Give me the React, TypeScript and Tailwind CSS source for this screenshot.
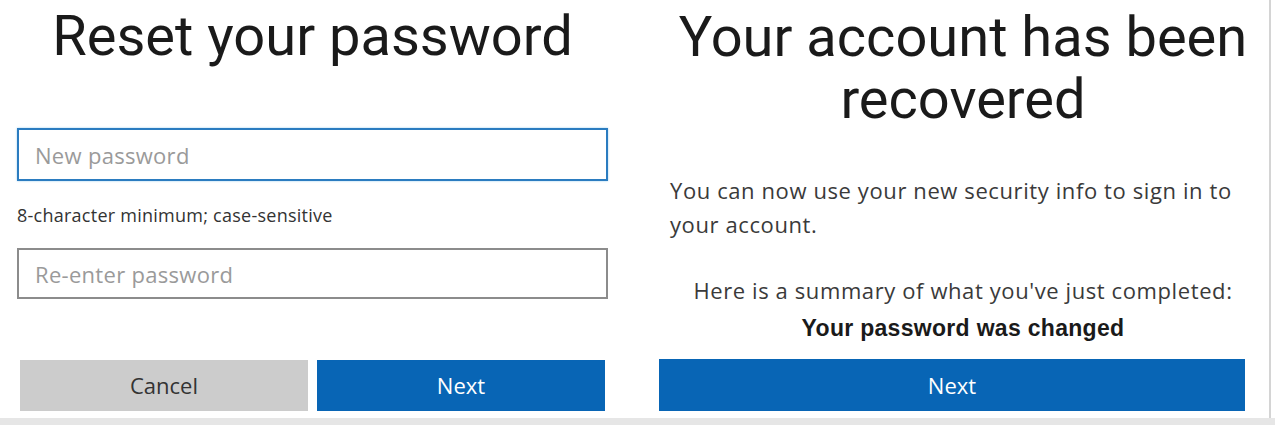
export default function App() {
  return (
    <div className="w-[1275px] h-[425px] bg-white flex flex-col overflow-hidden font-['Open_Sans',sans-serif]">
      <div className="flex flex-1">
        {/* Left: reset password */}
        <div className="w-[659px] pl-[17px] flex flex-col">
          <h1 className="w-[591px] text-center font-['Roboto',sans-serif] text-[56px] leading-[62px] text-[#1a1a1a] mt-[5px]">
            Reset your password
          </h1>
          <input
            type="password"
            placeholder="New password"
            className="mt-[61px] w-[591px] h-[53px] border-2 border-[#2b7cc0] shadow-[0_0_2px_#9fd0f0] px-[16px] text-[22px] tracking-[0.3px] text-[#333] placeholder:text-[#9a9a9a] outline-none"
          />
          <p className="mt-[24px] text-[18px] leading-[20px] tracking-[0.25px] text-[#333]">
            8-character minimum; case-sensitive
          </p>
          <input
            type="password"
            placeholder="Re-enter password"
            className="mt-[23px] w-[591px] h-[51px] border-2 border-[#8c8c8c] px-[16px] text-[22px] tracking-[0.3px] text-[#333] placeholder:text-[#9a9a9a] outline-none"
          />
          <div className="mt-[61px] flex gap-[9px] pl-[3px]">
            <button className="w-[288px] h-[51px] bg-[#cccccc] text-[22px] text-[#333]">Cancel</button>
            <button className="w-[288px] h-[51px] bg-[#0865b5] text-[22px] text-white">Next</button>
          </div>
        </div>

        {/* Right: account recovered */}
        <div className="w-[608px] flex flex-col">
          <h1 className="text-center font-['Roboto',sans-serif] text-[56px] leading-[62px] text-[#1a1a1a] mt-[6px]">
            Your account has been
            <br />
            recovered
          </h1>
          <p className="mt-[43px] pl-[11px] text-[22px] leading-[34px] tracking-[0.6px] text-[#3a3a3a]">
            You can now use your new security info to sign in to
            <br />
            your account.
          </p>
          <p className="mt-[34px] text-center text-[22px] leading-[30px] tracking-[0.6px] text-[#3a3a3a]">
            Here is a summary of what you've just completed:
          </p>
          <p className="mt-[10px] text-center font-['Liberation_Sans',sans-serif] font-bold text-[23px] leading-[26px] tracking-[0.3px] text-[#1a1a1a]">
            Your password was changed
          </p>
          <button className="mt-[18px] w-[586px] h-[52px] bg-[#0865b5] text-[22px] text-white">Next</button>
        </div>

        <div className="ml-auto mr-[4px] w-[2px] bg-[#d4d4d4]" />
      </div>
      <div className="h-[7px] bg-[#e6e6e6]" />
    </div>
  );
}
